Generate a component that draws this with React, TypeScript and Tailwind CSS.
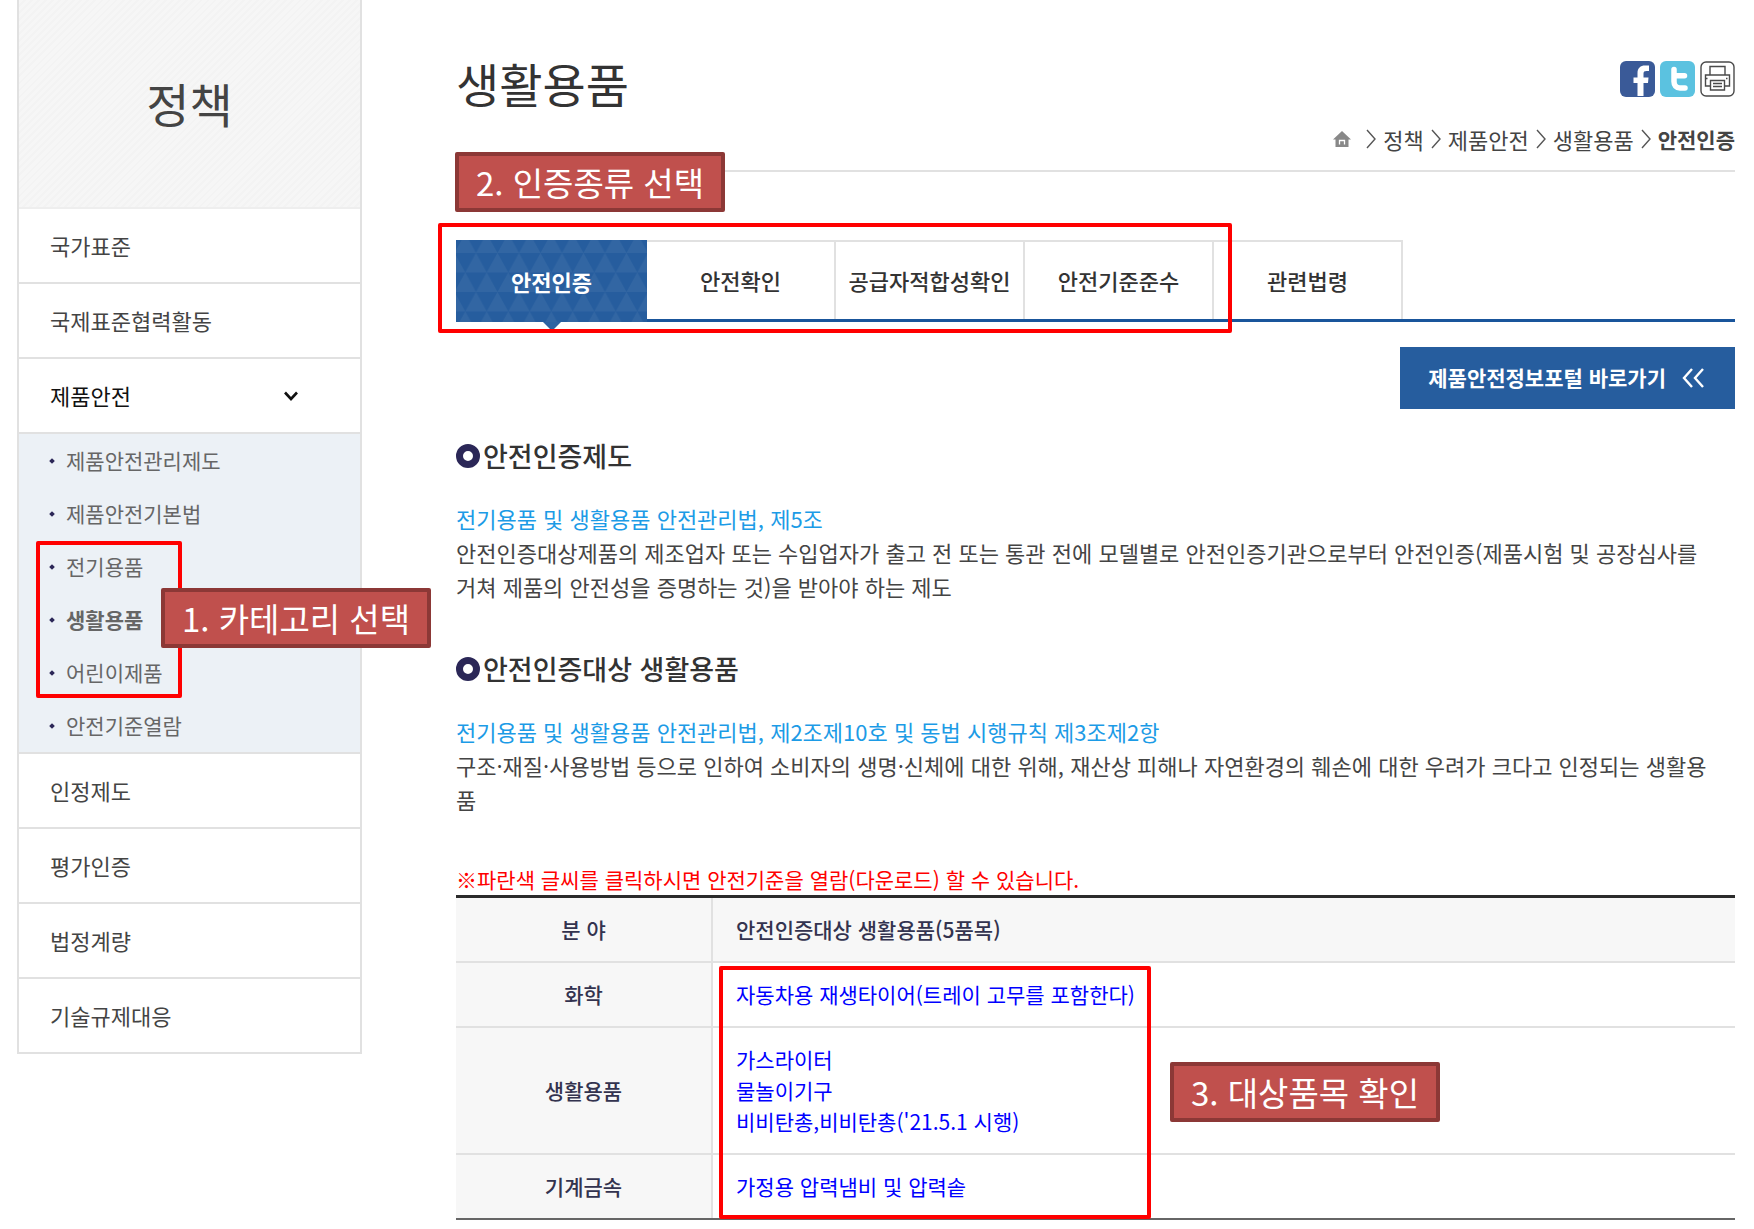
import { Fragment } from "react";
import clsx from "clsx";

const topMenus = ["국가표준", "국제표준협력활동"];
const bottomMenus = ["인정제도", "평가인증", "법정계량", "기술규제대응"];
const crumbs = ["정책", "제품안전", "생활용품"];
const tabs = ["안전인증", "안전확인", "공급자적합성확인", "안전기준준수"];

const rows = [
    { field: "화학", items: ["자동차용 재생타이어(트레이 고무를 포함한다)"] },
    {
        field: "생활용품",
        items: ["가스라이터", "물놀이기구", "비비탄총,비비탄총('21.5.1 시행)"],
    },
    { field: "기계금속", items: ["가정용 압력냄비 및 압력솥"] },
];

function Callout({ className, children }: { className: string; children: string }) {
    return (
        <div
            className={clsx(
                "absolute z-20 flex h-[60px] w-[270px] items-center justify-center rounded-xs border-4 border-[#8c3836] bg-[#c0504d] text-[33px] leading-[48px] whitespace-nowrap text-white",
                className
            )}
        >
            {children}
        </div>
    );
}

function RedBox({ className }: { className: string }) {
    return (
        <div
            className={clsx(
                "pointer-events-none absolute z-10 rounded-xs border-4 border-[#ff0000]",
                className
            )}
        />
    );
}

function MenuItem({ label }: { label: string }) {
    return (
        <a
            href="#"
            className="flex h-[75px] items-center border-b-2 border-[#e1e1e1] px-[31px] text-[22px] text-[#444]"
        >
            {label}
        </a>
    );
}

function SubItem({ label, active }: { label: string; active?: boolean }) {
    return (
        <a
            href="#"
            className={clsx(
                "flex h-[53px] items-center gap-3 pl-[31px] text-[21px] text-[#666]",
                active && "font-bold"
            )}
        >
            <span className="size-1 rotate-45 bg-[#2b2757]" />
            {label}
        </a>
    );
}

function Sidebar() {
    return (
        <aside className="w-[345px] shrink-0 self-start border-x-2 border-[#e1e1e1]">
            <h2 className="flex h-[209px] items-center justify-center border-b-2 border-[#eee] bg-[repeating-linear-gradient(135deg,#f6f6f6_0px,#f6f6f6_3px,#f3f3f3_3px,#f3f3f3_5px)] text-[47px] text-[#444]">
                정책
            </h2>
            <nav>
                {topMenus.map((menu) => (
                    <MenuItem key={menu} label={menu} />
                ))}
                <a
                    href="#"
                    className="flex h-[75px] items-center justify-between border-b-2 border-[#e1e1e1] pr-[62px] pl-[31px] text-[22px] text-[#111]"
                >
                    제품안전
                    <svg viewBox="0 0 14 10" className="h-[10px] w-[14px]" fill="none" stroke="#111" strokeWidth="2.6">
                        <path d="M1 1.5 7 8l6-6.5" />
                    </svg>
                </a>
                <div className="border-b-2 border-[#e1e1e1] bg-[#ecf1f6]">
                    <SubItem label="제품안전관리제도" />
                    <SubItem label="제품안전기본법" />
                    <div className="relative">
                        <SubItem label="전기용품" />
                        <SubItem label="생활용품" active />
                        <SubItem label="어린이제품" />
                        <RedBox className="inset-y-px left-[17px] w-[146px]" />
                        <Callout className="top-[48px] left-[142px]">1. 카테고리 선택</Callout>
                    </div>
                    <SubItem label="안전기준열람" />
                </div>
                {bottomMenus.map((menu) => (
                    <MenuItem key={menu} label={menu} />
                ))}
            </nav>
        </aside>
    );
}

function ShareIcons() {
    return (
        <div className="flex gap-[5px]">
            <a href="#" aria-label="Facebook">
                <svg viewBox="0 0 35 36" className="h-9 w-[35px]">
                    <rect width="35" height="36" rx="6" fill="#3a5a98" />
                    <path
                        d="M17.5 35V22h-4v-5.5h4V12c0-5 3-7.5 7.5-7.5h4V10h-2.5c-2.2 0-3 .8-3 2.6v3.900h5L28 22h-4.5v13z"
                        fill="#fff"
                    />
                </svg>
            </a>
            <a href="#" aria-label="Twitter">
                <svg viewBox="0 0 35 36" className="h-9 w-[35px]">
                    <rect width="35" height="36" rx="6" fill="#5bc2e0" />
                    <path
                        d="M14 8.5v12c0 4 2 6.500 6 6.500h5M14 14.800h10.500"
                        fill="none"
                        stroke="#fff"
                        strokeWidth="5.5"
                        strokeLinecap="round"
                    />
                </svg>
            </a>
            <button type="button" aria-label="인쇄">
                <svg viewBox="0 0 35 36" className="h-9 w-[35px]" fill="none" stroke="#4a4a4a" strokeWidth="1.4">
                    <rect x="1" y="1" width="33" height="34" rx="5" />
                    <path d="M10 14V5.5h15V14" />
                    <path d="M10.5 25h-5V14h24v11h-5" />
                    <path d="M5.5 17.5h2M26 17.5h1.500" />
                    <path d="M10.5 19.5h14V29h-14z" />
                    <path d="M13 22.5h9M13 25.5h9" />
                </svg>
            </button>
        </div>
    );
}

function Breadcrumb() {
    return (
        <nav className="flex items-center gap-[7px] text-[22px] leading-8 text-[#444]">
            <a href="#" aria-label="홈" className="mr-2">
                <svg viewBox="0 0 18 16" className="h-4 w-[18px]">
                    <path d="M9 0 0 8.500h2.500V16h13V8.500H18z" fill="#888" />
                    <path d="M6.500 13.500V9.500h5v4" fill="none" stroke="#fff" strokeWidth="1.3" />
                </svg>
            </a>
            {crumbs.map((crumb) => (
                <Fragment key={crumb}>
                    <CrumbArrow />
                    <a href="#">{crumb}</a>
                </Fragment>
            ))}
            <CrumbArrow />
            <span className="text-[21px] font-bold">안전인증</span>
        </nav>
    );
}

function CrumbArrow() {
    return (
        <svg viewBox="0 0 10 20" className="h-5 w-[10px]" fill="none" stroke="#555" strokeWidth="1.4">
            <path d="M1 1l8 9-8 9" />
        </svg>
    );
}

function Tabs() {
    return (
        <nav className="mt-[68px] flex border-b-[3px] border-[#19559b] text-[22px] font-medium text-[#333]">
            <div className="relative flex">
                {tabs.map((tab, i) =>
                    i === 0 ? (
                        <a
                            key={tab}
                            href="#"
                            aria-current="page"
                            className="relative -mb-[3px] flex h-[82px] w-[191px] items-center justify-center bg-[#265d9e] font-bold text-white"
                        >
                            <svg className="absolute inset-0 size-full">
                                <defs>
                                    <pattern id="triangles" y="13" width="21.5" height="39" patternUnits="userSpaceOnUse">
                                        <path
                                            d="M-1.5 0-12.25 19.5H9.25zM20 0 9.25 19.5h21.5zM9.25 19.5-1.5 39H20zM30.75 19.5 20 39h21.5z"
                                            fill="#3266a3"
                                        />
                                    </pattern>
                                </defs>
                                <rect width="100%" height="100%" fill="url(#triangles)" />
                            </svg>
                            <span className="relative">{tab}</span>
                            <svg viewBox="0 0 18 9" className="absolute top-full h-[9px] w-[18px]">
                                <path d="M0 0h18L9 9z" fill="#2d63a2" />
                            </svg>
                        </a>
                    ) : (
                        <a
                            key={tab}
                            href="#"
                            className="flex h-[79px] w-[189px] items-center justify-center border-t-2 border-r-2 border-[#e1e1e1]"
                        >
                            {tab}
                        </a>
                    )
                )}
                <RedBox className="-inset-x-[18px] -top-[17px] -bottom-[14px]" />
            </div>
            <a
                href="#"
                className="flex h-[79px] w-[189px] items-center justify-center border-t-2 border-r-2 border-[#e1e1e1]"
            >
                관련법령
            </a>
        </nav>
    );
}

function Section({ title, law, children }: { title: string; law: string; children: React.ReactNode }) {
    return (
        <section>
            <h3 className="flex items-center gap-[3px] text-[27px] leading-10 font-medium text-[#333]">
                <span className="size-6 rounded-full border-[7px] border-[#2b2757]" />
                {title}
            </h3>
            <p className="mt-[25px] text-[22px] leading-[34px] text-[#444]">
                <span className="text-[#1c9be6]">{law}</span>
                <br />
                {children}
            </p>
        </section>
    );
}

function ItemTable() {
    return (
        <div className="relative">
            <table className="w-full border-separate border-spacing-0 border-t-[3px] border-b-2 border-t-[#2b2b2b] border-b-[#666] text-[21px] leading-[31px]">
                <thead>
                    <tr className="bg-[#f7f7f7] text-[#33334f]">
                        <th className="w-[257px] border-r-2 border-b-2 border-[#e1e1e1] py-4 font-medium">
                            분 야
                        </th>
                        <th className="border-b-2 border-[#e1e1e1] py-4 pl-[23px] text-left font-medium">
                            안전인증대상 생활용품(5품목)
                        </th>
                    </tr>
                </thead>
                <tbody>
                    {rows.map((row) => (
                        <tr key={row.field} className="group">
                            <th className="border-r-2 border-b-2 border-[#e1e1e1] bg-[#f7f7f7] py-4 font-medium text-[#33334f] group-last:border-b-0">
                                {row.field}
                            </th>
                            <td className="border-b-2 border-[#e1e1e1] py-4 pl-[23px] group-last:border-b-0">
                                {row.items.map((item) => (
                                    <a key={item} href="#" className="block text-[#0000ff]">
                                        {item}
                                    </a>
                                ))}
                            </td>
                        </tr>
                    ))}
                </tbody>
            </table>
            <RedBox className="top-[71px] bottom-px left-[263px] w-[432px]" />
            <Callout className="top-[167px] left-[714px]">3. 대상품목 확인</Callout>
        </div>
    );
}

export default function App() {
    return (
        <div
            lang="ko"
            className="flex min-h-screen bg-white pr-[19px] pl-[17px] font-['Noto_Sans_CJK_KR',sans-serif]"
        >
            <Sidebar />
            <main className="ml-[94px] min-w-0 flex-1">
                <header className="relative flex items-start justify-between border-b-2 border-[#e1e1e1] pb-[15px]">
                    <h1 className="pt-[52px] text-[47px] leading-[62px] text-[#333]">생활용품</h1>
                    <div className="flex flex-col items-end gap-[26px] pt-[61px]">
                        <ShareIcons />
                        <Breadcrumb />
                    </div>
                    <Callout className="-bottom-[42px] -left-px">2. 인증종류 선택</Callout>
                </header>

                <Tabs />

                <div className="mt-[25px] flex justify-end">
                    <a
                        href="#"
                        className="flex h-[62px] items-center gap-4 bg-[#265d9e] pr-[30px] pl-7 text-[21px] font-bold text-white"
                    >
                        제품안전정보포털 바로가기
                        <svg viewBox="0 0 23 20" className="h-5 w-[23px]" fill="none" stroke="#fff" strokeWidth="2.4">
                            <path d="M10 1 2 10l8 9M21 1l-8 9 8 9" />
                        </svg>
                    </a>
                </div>

                <div className="mt-[27px] space-y-[46px]">
                    <Section title="안전인증제도" law="전기용품 및 생활용품 안전관리법, 제5조">
                        안전인증대상제품의 제조업자 또는 수입업자가 출고 전 또는 통관 전에 모델별로
                        안전인증기관으로부터 안전인증(제품시험 및 공장심사를
                        <br />
                        거쳐 제품의 안전성을 증명하는 것)을 받아야 하는 제도
                    </Section>
                    <Section
                        title="안전인증대상 생활용품"
                        law="전기용품 및 생활용품 안전관리법, 제2조제10호 및 동법 시행규칙 제3조제2항"
                    >
                        구조·재질·사용방법 등으로 인하여 소비자의 생명·신체에 대한 위해, 재산상 피해나
                        자연환경의 훼손에 대한 우려가 크다고 인정되는 생활용
                        <br />품
                    </Section>
                </div>

                <p className="mt-[47px] text-[21px] leading-8 text-[#ff0000]">
                    ※파란색 글씨를 클릭하시면 안전기준을 열람(다운로드) 할 수 있습니다.
                </p>
                <ItemTable />
            </main>
        </div>
    );
}
